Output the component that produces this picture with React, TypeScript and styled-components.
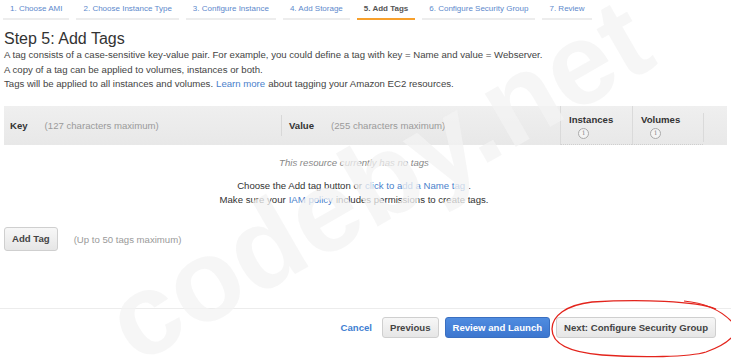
import React from "react";
import styled, { createGlobalStyle, css } from "styled-components";

const GlobalStyle = createGlobalStyle`
  html, body {
    margin: 0;
    padding: 0;
    background: #fff;
  }
  body {
    font-family: "Liberation Sans", Arial, sans-serif;
    color: #444;
    overflow: hidden;
  }
`;

const Page = styled.div`
  position: relative;
  width: 731px;
  height: 362px;
  overflow: hidden;
`;

const Steps = styled.nav`
  display: flex;
  gap: 7px;
  height: 20px;
  padding-left: 3px;
`;

const Step = styled.a<{ $active?: boolean }>`
  display: block;
  height: 18px;
  line-height: 18px;
  padding: 0 7px;
  font-size: 8px;
  white-space: nowrap;
  color: #5d89cc;
  border-bottom: 2px solid #ededed;
  ${(p) =>
    p.$active &&
    css`
      color: #555;
      font-weight: bold;
      border-bottom-color: #f7a02c;
    `}
`;

const Content = styled.main`
  padding: 0 4px;
`;

const Title = styled.h1`
  margin: 9px 0 0;
  font-size: 16px;
  line-height: 19px;
  font-weight: normal;
  color: #333;
`;

const Intro = styled.p`
  margin: 0;
  font-size: 9.6px;
  line-height: 14.5px;
  color: #444;
`;

const Link = styled.a`
  color: #4a7fcb;
  text-decoration: none;
  margin: 0 3px;
`;

const Table = styled.section`
  margin-top: 14.5px;
`;

const TableHead = styled.div`
  display: grid;
  grid-template-columns: 277px 279px 72px 71px 15px;
  height: 39px;
  background: linear-gradient(#efefef, #e8e8e8);
  font-size: 9.6px;
`;

const HeadCell = styled.div<{ $divider?: boolean }>`
  display: flex;
  align-items: center;
  gap: 17px;
  padding-left: ${(p) => (p.$divider ? 7 : 6)}px;
  ${(p) =>
    p.$divider &&
    css`
      border-left: 1px solid #d8d8d8;
      margin: 9px 0;
    `}
`;

const FlagCell = styled.div`
  display: flex;
  flex-direction: column;
  align-items: flex-start;
  gap: 3px;
  padding: 8px 0 0 8px;
  border-left: 1px solid #dadada;
  border-bottom: 1px dotted #cfcfcf;
`;

const Spare = styled.div`
  border-left: 1px solid #dadada;
  margin: 7px 0 3px;
`;

const ColName = styled.b`
  color: #333;
  line-height: 11px;
`;

const Hint = styled.span`
  color: #9a9a9a;
`;

const Info = styled.span`
  display: flex;
  align-items: center;
  justify-content: center;
  width: 9px;
  height: 9px;
  margin-left: 9px;
  border: 1px solid #aaa;
  border-radius: 50%;
  font-family: "DejaVu Serif", serif;
  font-size: 7px;
  line-height: 1;
  color: #888;
  background: #f4f4f4;
`;

const Empty = styled.div`
  width: 700px;
  padding-top: 11px;
  text-align: center;
  font-size: 9.6px;
`;

const EmptyNote = styled.div`
  line-height: 14px;
  font-style: italic;
  color: #888;
  margin-bottom: 9px;
`;

const EmptyHelp = styled.div`
  line-height: 14px;
  color: #333;
`;

const AddRow = styled.div`
  display: flex;
  align-items: center;
  gap: 16px;
  margin-top: 20px;
  font-size: 9.6px;
`;

const Button = styled.button<{ $primary?: boolean; $tall?: boolean }>`
  font-family: "Liberation Sans", Arial, sans-serif;
  font-size: 9.6px;
  font-weight: bold;
  line-height: ${(p) => (p.$tall ? 10 : 11)}px;
  padding: ${(p) => (p.$tall ? "6px 7px" : "4px 7px")};
  border-radius: 3px;
  border: 1px solid #cfcfcf;
  background: linear-gradient(#f7f7f7, #e6e6e6);
  color: #444;
  white-space: nowrap;
  cursor: pointer;
  ${(p) =>
    p.$primary &&
    css`
      border-color: #3a6fc0;
      background: linear-gradient(#4f8ce0, #3c76cf);
      color: #fff;
    `}
`;

const Footer = styled.footer`
  margin-top: 57px;
  border-top: 1px solid #ececec;
  display: flex;
  justify-content: flex-end;
  align-items: center;
  gap: 6px;
  padding: 8px 15px 0 0;
`;

const CancelLink = styled.a`
  font-size: 9.6px;
  font-weight: bold;
  color: #3f7fd2;
  margin-right: 4px;
`;

const Watermark = styled.span`
  position: absolute;
  left: 378px;
  top: 180px;
  transform: translate(-50%, -50%) rotate(-30deg);
  font-family: "Liberation Sans", Arial, sans-serif;
  font-weight: bold;
  font-size: 116px;
  line-height: 1;
  white-space: nowrap;
  color: rgba(243, 243, 243, 0.75);
  pointer-events: none;
`;

const Annotation = styled.svg`
  position: absolute;
  left: 0;
  top: 0;
  pointer-events: none;
`;

const steps = [
  "1. Choose AMI",
  "2. Choose Instance Type",
  "3. Configure Instance",
  "4. Add Storage",
  "5. Add Tags",
  "6. Configure Security Group",
  "7. Review",
];

export default function App() {
  return (
    <Page>
      <GlobalStyle />
      <Steps>
        {steps.map((s, i) => (
          <Step key={s} $active={i === 4}>
            {s}
          </Step>
        ))}
      </Steps>
      <Content>
        <Title>Step 5: Add Tags</Title>
        <Intro>
          A tag consists of a case-sensitive key-value pair. For example, you could define a tag with key = Name and value = Webserver.
          <br />
          A copy of a tag can be applied to volumes, instances or both.
          <br />
          Tags will be applied to all instances and volumes.<Link>Learn more</Link>about tagging your Amazon EC2 resources.
        </Intro>
        <Table>
          <TableHead>
            <HeadCell>
              <ColName>Key</ColName>
              <Hint>(127 characters maximum)</Hint>
            </HeadCell>
            <HeadCell $divider>
              <ColName>Value</ColName>
              <Hint>(255 characters maximum)</Hint>
            </HeadCell>
            <FlagCell>
              <ColName>Instances</ColName>
              <Info>i</Info>
            </FlagCell>
            <FlagCell>
              <ColName>Volumes</ColName>
              <Info>i</Info>
            </FlagCell>
            <Spare />
          </TableHead>
          <Empty>
            <EmptyNote>This resource currently has no tags</EmptyNote>
            <EmptyHelp>
              Choose the Add tag button or<Link>click to add a Name tag</Link>.
            </EmptyHelp>
            <EmptyHelp>
              Make sure your<Link>IAM policy</Link>includes permissions to create tags.
            </EmptyHelp>
          </Empty>
        </Table>
        <AddRow>
          <Button $tall>Add Tag</Button>
          <Hint>(Up to 50 tags maximum)</Hint>
        </AddRow>
      </Content>
      <Footer>
        <CancelLink>Cancel</CancelLink>
        <Button>Previous</Button>
        <Button $primary>Review and Launch</Button>
        <Button>Next: Configure Security Group</Button>
      </Footer>
      <Watermark>codeby.net</Watermark>
      <Annotation width="731" height="362" viewBox="0 0 731 362">
        <path
          d="M 716 309 C 696 301, 640 299, 592 302 C 566 305, 552 316, 552 329 C 552 343, 566 352, 602 355 C 642 358, 690 357, 706 352 C 720 347, 728 342, 733 336"
          fill="none"
          stroke="#e3241c"
          strokeWidth="1.3"
        />
        <path
          d="M 684 301 C 706 303, 722 311, 733 323"
          fill="none"
          stroke="#e3241c"
          strokeWidth="1.2"
        />
      </Annotation>
    </Page>
  );
}
